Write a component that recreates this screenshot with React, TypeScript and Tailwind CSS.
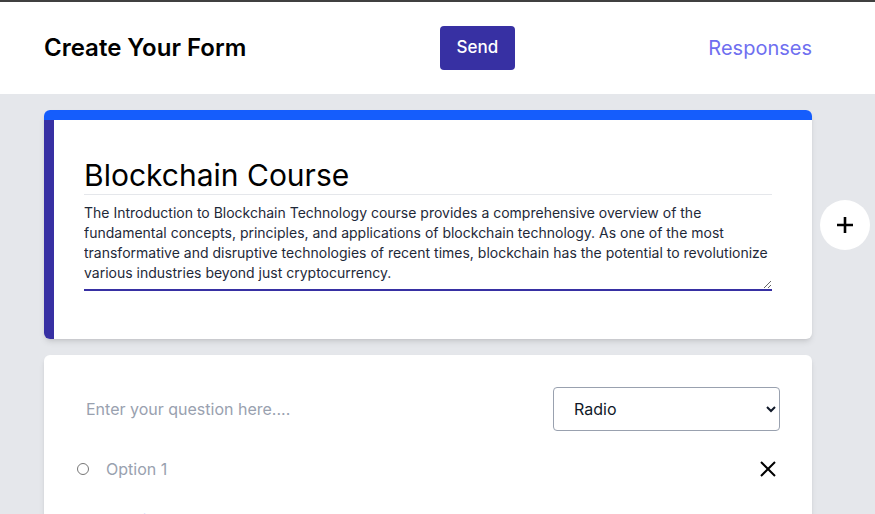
import { useState } from 'react';

const description =
  'The Introduction to Blockchain Technology course provides a comprehensive overview of the fundamental concepts, principles, and applications of blockchain technology. As one of the most transformative and disruptive technologies of recent times, blockchain has the potential to revolutionize various industries beyond just cryptocurrency.';

function Header() {
  return (
    <header className="bg-white border-t-2 border-[#404040]">
      <div className="w-[768px] ml-[44px] h-[92px] flex items-center justify-between">
        <h1 className="text-[24px] font-semibold text-black">Create Your Form</h1>
        <button className="w-[75px] h-[44px] rounded bg-[#3730a3] text-white text-[17px] font-medium">
          Send
        </button>
        <a href="#" className="text-[20px] text-[#6f6ff0]">
          Responses
        </a>
      </div>
    </header>
  );
}

function PlusIcon() {
  return (
    <svg width="18" height="18" viewBox="0 0 18 18">
      <path d="M9 1v16M1 9h16" stroke="black" strokeWidth="2.6" fill="none" />
    </svg>
  );
}

function CloseIcon() {
  return (
    <svg width="16" height="16" viewBox="0 0 16 16">
      <path d="M1 1l14 14M15 1L1 15" stroke="black" strokeWidth="2" fill="none" />
    </svg>
  );
}

export default function App() {
  const [title, setTitle] = useState('Blockchain Course');
  const [desc, setDesc] = useState(description);

  return (
    <div className="min-h-screen bg-gray-200 font-['Inter',sans-serif]">
      <Header />

      <main className="pt-4 pl-[44px]">
        {/* Form title card */}
        <div className="flex items-center gap-2">
          <div className="w-[768px] bg-white rounded-md shadow-md overflow-hidden">
            <div className="h-[10px] bg-blue-600" />
            <div className="border-l-[10px] border-[#3730a3] pl-[30px] pr-10 pt-[33px] pb-12">
              <input
                value={title}
                onChange={(e) => setTitle(e.target.value)}
                className="w-full h-[42px] pt-1 text-[30px] text-black border-b border-gray-200 outline-none"
              />
              <textarea
                value={desc}
                onChange={(e) => setDesc(e.target.value)}
                rows={4}
                className="block w-full pt-2 pb-1.5 text-sm leading-5 text-gray-800 border-b-2 border-[#3730a3] outline-none"
              />
            </div>
          </div>
          <button className="w-[50px] h-[50px] rounded-full bg-white flex items-center justify-center">
            <PlusIcon />
          </button>
        </div>

        {/* Question card */}
        <div className="w-[768px] mt-4 bg-white rounded-md shadow-md px-8 pt-8 pb-6">
          <div className="flex items-center gap-6">
            <input
              placeholder="Enter your question here...."
              className="flex-1 h-[44px] px-2.5 text-base placeholder:text-gray-400 outline-none"
            />
            <select className="w-[227px] h-[44px] pl-4 pr-2 text-base text-gray-900 border border-gray-400 rounded bg-white">
              <option>Radio</option>
              <option>Checkbox</option>
              <option>Text</option>
            </select>
          </div>

          <div className="flex items-center mt-[26px] h-6">
            <input type="radio" name="preview" className="ml-px w-3 h-3" />
            <input
              placeholder="Option 1"
              className="flex-1 ml-[17px] text-base placeholder:text-gray-400 outline-none"
            />
            <button className="mr-1">
              <CloseIcon />
            </button>
          </div>

          <button className="mt-[27px] ml-1 text-base text-[#6f6ff0]">Add Option</button>
        </div>
      </main>
    </div>
  );
}
